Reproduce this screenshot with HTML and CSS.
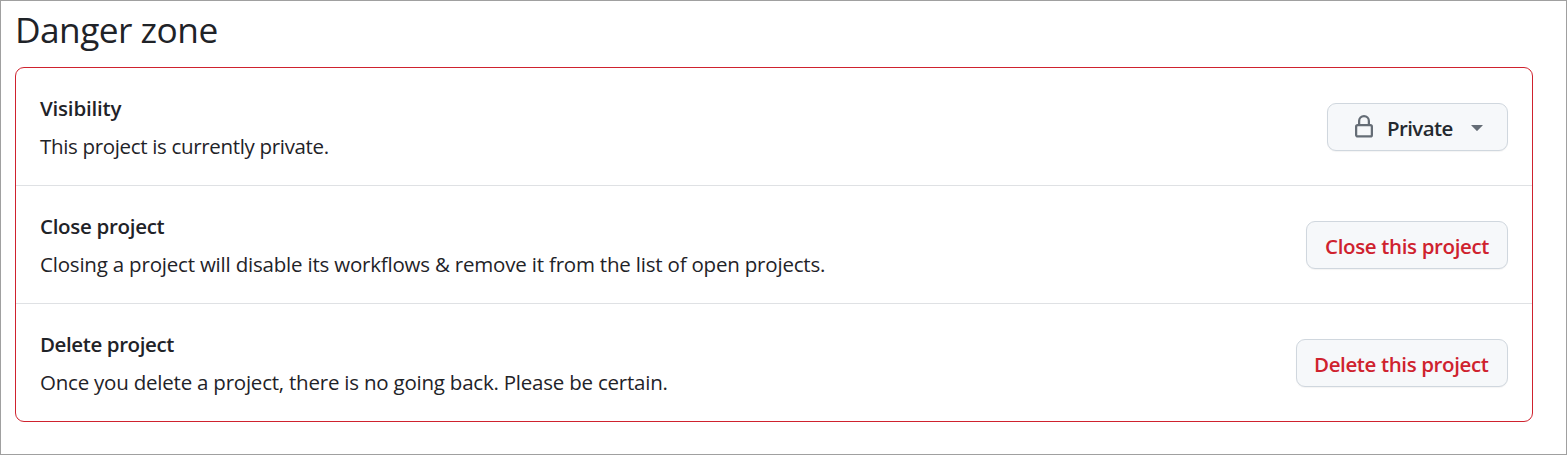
FILE: index.html
```html
<!DOCTYPE html>
<html lang="en">
<head>
<meta charset="utf-8">
<title>Danger zone</title>
<link rel="stylesheet" href="styles.css">
</head>
<body>
<main class="page">
  <h2 class="title">Danger zone</h2>
  <section class="box">
    <div class="row">
      <div class="info">
        <strong class="name n1">Visibility</strong>
        <p class="desc d1">This project is currently private.</p>
      </div>
      <button class="btn btn-private">
        <svg class="lock" viewBox="0 0 16 16" width="24" height="24"><path fill-rule="evenodd" d="M4 4v2h-.25A1.75 1.75 0 0 0 2 7.75v5.5c0 .966.784 1.75 1.75 1.75h8.5A1.75 1.75 0 0 0 14 13.25v-5.5A1.75 1.75 0 0 0 12.25 6H12V4a4 4 0 1 0-8 0Zm6.5 2V4a2.5 2.5 0 1 0-5 0v2h5ZM12 7.5h.25a.25.25 0 0 1 .25.25v5.5a.25.25 0 0 1-.25.25h-8.5a.25.25 0 0 1-.25-.25v-5.5a.25.25 0 0 1 .25-.25H12Z"/></svg>
        <span class="label b1">Private</span>
        <svg class="caret" viewBox="0 0 12 6" width="12" height="6"><path d="M.6 0h10.8q.6 0 .2.5L6.4 5.8q-.4.4-.8 0L.4.5Q0 0 .6 0z"/></svg>
      </button>
    </div>
    <div class="row">
      <div class="info">
        <strong class="name n2">Close project</strong>
        <p class="desc d2">Closing a project will disable its workflows &amp; remove it from the list of open projects.</p>
      </div>
      <button class="btn btn-close"><span class="label b2">Close this project</span></button>
    </div>
    <div class="row">
      <div class="info">
        <strong class="name n3">Delete project</strong>
        <p class="desc d3">Once you delete a project, there is no going back. Please be certain.</p>
      </div>
      <button class="btn btn-delete"><span class="label b3">Delete this project</span></button>
    </div>
  </section>
</main>
</body>
</html>
```
FILE: styles.css
```css
* { box-sizing: border-box; }
body { margin: 0; background: #fff; color: #1f2328; font-family: "Segoe UI", "Open Sans", "Noto Sans", sans-serif; }
.page { height: 455px; border: 1px solid #a0a0a0; padding: 0 33px 0 14px; }
.title { margin: 0; height: 66px; font-size: 35.3px; line-height: 57px; font-weight: 400; letter-spacing: -0.55px; white-space: nowrap; }
.box { height: 355px; border: 1px solid #cf222e; border-radius: 9px; }
.row { display: flex; align-items: center; justify-content: space-between; height: 118px; padding: 0 24px; border-bottom: 1px solid #dfe1e4; }
.row:last-child { height: 117px; border-bottom: 0; }
.info { display: flex; flex-direction: column; white-space: nowrap; padding-top: 1px; }
.name { font-size: 20.5px; line-height: 38px; font-weight: 600; }
.desc { margin: 0; font-size: 20.5px; line-height: 38px; }
.n1 { letter-spacing: -0.2px; }
.n2 { letter-spacing: -0.3px; }
.n3 { letter-spacing: -0.4px; }
.d1 { letter-spacing: -0.33px; }
.d2 { letter-spacing: -0.2px; }
.d3 { letter-spacing: -0.22px; }
.btn { display: flex; align-items: center; justify-content: flex-start; height: 48px; padding: 0 0 0 18px; border: 1px solid #d0d7de; border-radius: 9px; background: #f6f8fa; box-shadow: 0 1px 1px rgba(31, 35, 40, 0.05); color: #cf222e; font: 600 20.5px "Segoe UI", "Open Sans", "Noto Sans", sans-serif; white-space: nowrap; }
.label { padding-top: 2px; }
.b1 { letter-spacing: -0.6px; width: 84px; margin-left: 11px; text-align: left; }
.b2 { letter-spacing: -0.35px; }
.b3 { letter-spacing: -0.38px; }
.btn-private { width: 181px; padding-left: 24px; color: #24292f; }
.btn-close { width: 202px; }
.btn-delete { width: 212px; padding-left: 17px; }
.lock { fill: #656d76; }
.caret { fill: #656d76; margin-top: 2px; }
```
